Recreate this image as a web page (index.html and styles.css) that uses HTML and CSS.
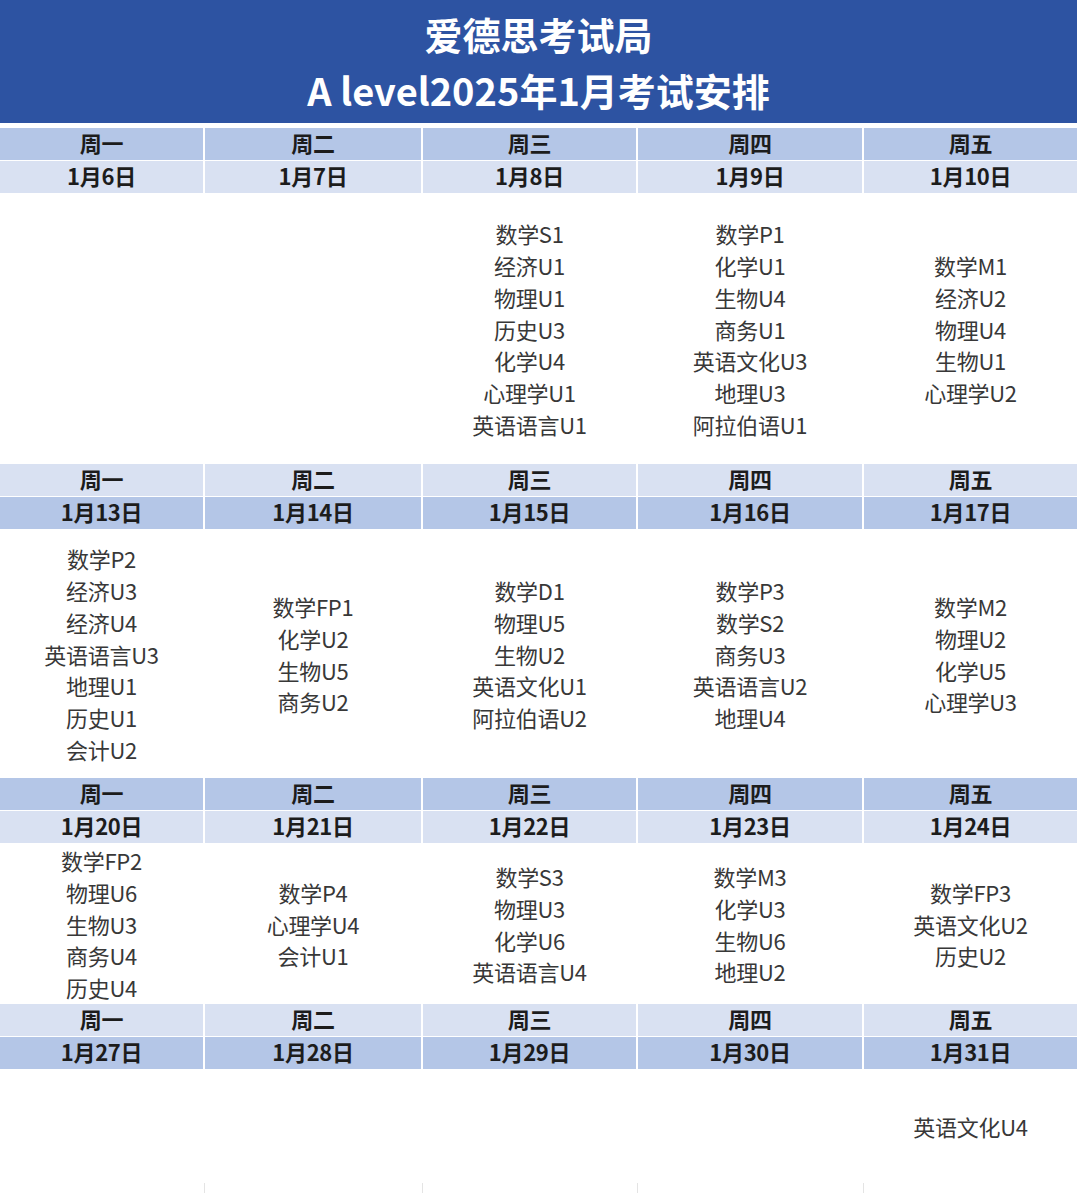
FILE: index.html
```html
<!DOCTYPE html>
<html lang="zh-CN">
<head>
<meta charset="utf-8">
<title>爱德思考试局 A level2025年1月考试安排</title>
<link rel="stylesheet" href="styles.css">
</head>
<body>
<div class="page">
  <header class="banner">
    <div class="title">爱德思考试局</div>
    <div class="title">A level2025年1月考试安排</div>
  </header>

  <section class="week w-a b1">
    <div class="cell day">周一</div><div class="cell day">周二</div><div class="cell day">周三</div><div class="cell day">周四</div><div class="cell day">周五</div>
    <div class="cell date">1月6日</div><div class="cell date">1月7日</div><div class="cell date">1月8日</div><div class="cell date">1月9日</div><div class="cell date">1月10日</div>
    <div class="cell body"></div>
    <div class="cell body"></div>
    <div class="cell body"><span>数学S1</span><span>经济U1</span><span>物理U1</span><span>历史U3</span><span>化学U4</span><span>心理学U1</span><span>英语语言U1</span></div>
    <div class="cell body"><span>数学P1</span><span>化学U1</span><span>生物U4</span><span>商务U1</span><span>英语文化U3</span><span>地理U3</span><span>阿拉伯语U1</span></div>
    <div class="cell body"><span>数学M1</span><span>经济U2</span><span>物理U4</span><span>生物U1</span><span>心理学U2</span></div>
  </section>

  <section class="week w-b b2">
    <div class="cell day">周一</div><div class="cell day">周二</div><div class="cell day">周三</div><div class="cell day">周四</div><div class="cell day">周五</div>
    <div class="cell date">1月13日</div><div class="cell date">1月14日</div><div class="cell date">1月15日</div><div class="cell date">1月16日</div><div class="cell date">1月17日</div>
    <div class="cell body"><span>数学P2</span><span>经济U3</span><span>经济U4</span><span>英语语言U3</span><span>地理U1</span><span>历史U1</span><span>会计U2</span></div>
    <div class="cell body"><span>数学FP1</span><span>化学U2</span><span>生物U5</span><span>商务U2</span></div>
    <div class="cell body"><span>数学D1</span><span>物理U5</span><span>生物U2</span><span>英语文化U1</span><span>阿拉伯语U2</span></div>
    <div class="cell body"><span>数学P3</span><span>数学S2</span><span>商务U3</span><span>英语语言U2</span><span>地理U4</span></div>
    <div class="cell body"><span>数学M2</span><span>物理U2</span><span>化学U5</span><span>心理学U3</span></div>
  </section>

  <section class="week w-a b3">
    <div class="cell day">周一</div><div class="cell day">周二</div><div class="cell day">周三</div><div class="cell day">周四</div><div class="cell day">周五</div>
    <div class="cell date">1月20日</div><div class="cell date">1月21日</div><div class="cell date">1月22日</div><div class="cell date">1月23日</div><div class="cell date">1月24日</div>
    <div class="cell body"><span>数学FP2</span><span>物理U6</span><span>生物U3</span><span>商务U4</span><span>历史U4</span></div>
    <div class="cell body"><span>数学P4</span><span>心理学U4</span><span>会计U1</span></div>
    <div class="cell body"><span>数学S3</span><span>物理U3</span><span>化学U6</span><span>英语语言U4</span></div>
    <div class="cell body"><span>数学M3</span><span>化学U3</span><span>生物U6</span><span>地理U2</span></div>
    <div class="cell body"><span>数学FP3</span><span>英语文化U2</span><span>历史U2</span></div>
  </section>

  <section class="week w-b b4">
    <div class="cell day">周一</div><div class="cell day">周二</div><div class="cell day">周三</div><div class="cell day">周四</div><div class="cell day">周五</div>
    <div class="cell date">1月27日</div><div class="cell date">1月28日</div><div class="cell date">1月29日</div><div class="cell date">1月30日</div><div class="cell date">1月31日</div>
    <div class="cell body"></div>
    <div class="cell body"></div>
    <div class="cell body"></div>
    <div class="cell body"></div>
    <div class="cell body"><span>英语文化U4</span></div>
    <div class="cell tail"></div><div class="cell tail"></div><div class="cell tail"></div><div class="cell tail"></div><div class="cell tail last"></div>
  </section>
</div>
</body>
</html>
```

FILE: styles.css
```css
html, body {
  margin: 0;
  padding: 0;
  background: #ffffff;
}

body {
  font-family: "Noto Sans CJK SC", "Noto Sans", sans-serif;
  color: #333;
}

.page {
  width: 1077px;
  height: 1193px;
  overflow: hidden;
}

.banner {
  background: #2d53a2;
  height: 123px;
  box-sizing: border-box;
  padding-top: 6px;
  margin-bottom: 5px;
  display: flex;
  flex-direction: column;
  align-items: center;
}

.title {
  color: #ffffff;
  font-weight: 700;
  font-size: 38px;
  line-height: 56px;
}

.week {
  display: grid;
  grid-template-columns: 203px 216px 213px 224px 213px;
  column-gap: 2px;
  row-gap: 1px;
}

.b1 { grid-template-rows: 32px 32px 270px; }
.b2 { grid-template-rows: 32px 32px 248px; }
.b3 { grid-template-rows: 32px 32px 160px; }
.b4 { grid-template-rows: 32px 32px 112px 10px; }

.cell {
  display: flex;
  align-items: center;
  justify-content: center;
}

.day, .date {
  font-weight: 700;
  font-size: 22px;
  color: #1c1c1c;
  letter-spacing: -0.3px;
  box-sizing: border-box;
  padding-bottom: 4px;
}

.w-a .day { background: #b4c6e7; }
.w-a .date { background: #d9e1f2; }
.w-b .day { background: #d9e1f2; }
.w-b .date { background: #b4c6e7; }

.body {
  flex-direction: column;
  font-size: 22px;
  line-height: 31.8px;
  color: #383838;
  letter-spacing: -0.3px;
  margin-bottom: -1px;
}

.tail {
  border-right: 1px solid #e4e4e4;
  margin-right: -2px;
}

.tail.last {
  border-right: none;
}
```
